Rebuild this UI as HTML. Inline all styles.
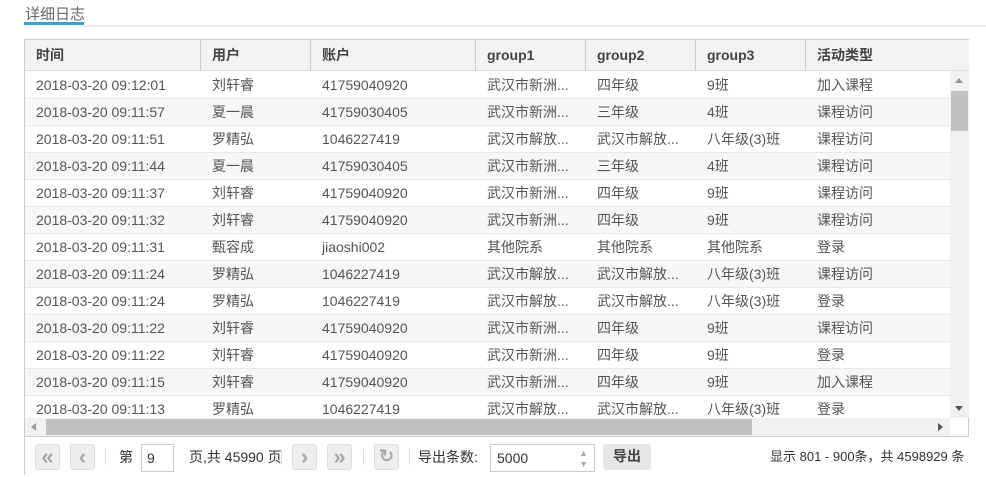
<!DOCTYPE html>
<html><head><meta charset="utf-8"><style>
*{margin:0;padding:0;box-sizing:border-box}
body{width:986px;height:475px;background:#fff;font-family:"Liberation Sans","Noto Sans CJK SC",sans-serif;font-size:14px;color:#555;position:relative;overflow:hidden}
.title{position:absolute;left:25px;top:3px;font-size:15px;color:#666}
.tbar{position:absolute;left:24px;top:22px;width:60px;height:3px;background:#3ba0d8}
.tline{position:absolute;left:24px;top:25px;width:962px;height:2px;background:#eee}
.box{position:absolute;left:24px;top:39px;width:945px;height:436px;border:1px solid #ccc;border-bottom:none}
.hd{position:absolute;left:0;top:0;width:944px;height:31px;background:#f3f3f3;border-bottom:1px solid #ddd}
.hd div{position:absolute;top:0;height:30px;line-height:30px;padding-left:11px;font-weight:bold;color:#444;border-right:1px solid #ccc}
.row{position:absolute;left:0;width:925px;height:27px;border-bottom:1px solid #e8e8e8}
.row div{position:absolute;top:0;line-height:27px;padding-left:11px;white-space:nowrap}
.vs{position:absolute;left:925px;top:31px;width:19px;height:347px;background:#f1f1f1}
.hs{position:absolute;left:0;top:378px;width:925px;height:18px;background:#f1f1f1}
.pg{position:absolute;left:0;top:396px;width:944px;height:40px;border-top:1px solid #ccc;background:#fff}
.b{position:absolute;top:7px;width:25px;height:26px;border:1px solid #ddd;border-radius:3px;background:#eee;color:#aaa;font-size:22px;text-align:center;line-height:23px;font-weight:bold}
.sep{position:absolute;top:12px;width:1px;height:16px;background:#ddd}
.t{position:absolute;top:0;line-height:40px;color:#333}
</style></head><body>
<div class="title">详细日志</div><div class="tbar"></div><div class="tline"></div>
<div class="box">
<div class="hd">
<div style="left:0;width:176px">时间</div>
<div style="left:176px;width:110px">用户</div>
<div style="left:286px;width:165px">账户</div>
<div style="left:451px;width:110px">group1</div>
<div style="left:561px;width:110px">group2</div>
<div style="left:671px;width:110px">group3</div>
<div style="left:781px;width:163px;border:none">活动类型</div>
</div>
<div id="rows"></div>
<div class="vs"><div style="position:absolute;left:5px;top:7px;border:4px solid transparent;border-bottom:5px solid #999;border-top:none"></div><div style="position:absolute;left:1px;top:20px;width:17px;height:40px;background:#c1c1c1"></div><div style="position:absolute;left:5px;bottom:7px;border:4px solid transparent;border-top:5px solid #555;border-bottom:none"></div></div>
<div class="hs"><div style="position:absolute;left:6px;top:5px;border:4px solid transparent;border-right:5px solid #999;border-left:none"></div><div style="position:absolute;left:21px;top:1px;width:706px;height:16px;background:#c1c1c1"></div><div style="position:absolute;right:7px;top:5px;border:4px solid transparent;border-left:5px solid #555;border-right:none"></div></div>
<div class="pg">
<div class="b" style="left:10px">«</div><div class="b" style="left:45px">‹</div>
<div class="sep" style="left:80px"></div>
<div class="t" style="left:94px">第</div>
<div style="position:absolute;left:116px;top:7px;width:33px;height:28px;border:1px solid #ccc;line-height:26px;padding-left:5px;color:#333">9</div>
<div class="t" style="left:164px">页,共 45990 页</div>
<div class="sep" style="left:256px"></div>
<div class="b" style="left:267px">›</div><div class="b" style="left:302px">»</div>
<div class="sep" style="left:338px"></div>
<div class="b" style="left:349px;font-size:18px">↻</div>
<div class="sep" style="left:384px"></div>
<div class="t" style="left:393px">导出条数:</div>
<div style="position:absolute;left:465px;top:7px;width:105px;height:28px;border:1px solid #ccc;line-height:26px;padding-left:6px;color:#333">5000<span style="position:absolute;right:6px;top:0;font-size:9px;line-height:11px;color:#aaa;padding-top:3px">▲<br>▼</span></div>
<div style="position:absolute;left:578px;top:7px;width:48px;height:26px;background:#e6e6e6;border-radius:3px;text-align:center;line-height:24px;font-weight:bold;color:#444">导出</div>
<div class="t" style="left:745px;font-size:13px">显示 801 - 900条，共 4598929 条</div>
</div>
</div>
<script>
var d=[["刘轩睿","41759040920","武汉市新洲...","四年级","9班","加入课程","09:12:01"],
["夏一晨","41759030405","武汉市新洲...","三年级","4班","课程访问","09:11:57"],
["罗精弘","1046227419","武汉市解放...","武汉市解放...","八年级(3)班","课程访问","09:11:51"],
["夏一晨","41759030405","武汉市新洲...","三年级","4班","课程访问","09:11:44"],
["刘轩睿","41759040920","武汉市新洲...","四年级","9班","课程访问","09:11:37"],
["刘轩睿","41759040920","武汉市新洲...","四年级","9班","课程访问","09:11:32"],
["甄容成","jiaoshi002","其他院系","其他院系","其他院系","登录","09:11:31"],
["罗精弘","1046227419","武汉市解放...","武汉市解放...","八年级(3)班","课程访问","09:11:24"],
["罗精弘","1046227419","武汉市解放...","武汉市解放...","八年级(3)班","登录","09:11:24"],
["刘轩睿","41759040920","武汉市新洲...","四年级","9班","课程访问","09:11:22"],
["刘轩睿","41759040920","武汉市新洲...","四年级","9班","登录","09:11:22"],
["刘轩睿","41759040920","武汉市新洲...","四年级","9班","加入课程","09:11:15"],
["罗精弘","1046227419","武汉市解放...","武汉市解放...","八年级(3)班","登录","09:11:13"]];
var L=[0,176,286,451,561,671,781],h="";
d.forEach(function(r,i){h+='<div class="row" style="top:'+(32+i*27)+'px;background:'+(i%2?'#f7f7f7':'#fff')+'"><div style="left:0">2018-03-20 '+r[6]+'</div>';
for(var j=0;j<6;j++)h+='<div style="left:'+L[j+1]+'px">'+r[j]+'</div>';h+='</div>';});
document.getElementById('rows').innerHTML=h;
</script>
</body></html>
